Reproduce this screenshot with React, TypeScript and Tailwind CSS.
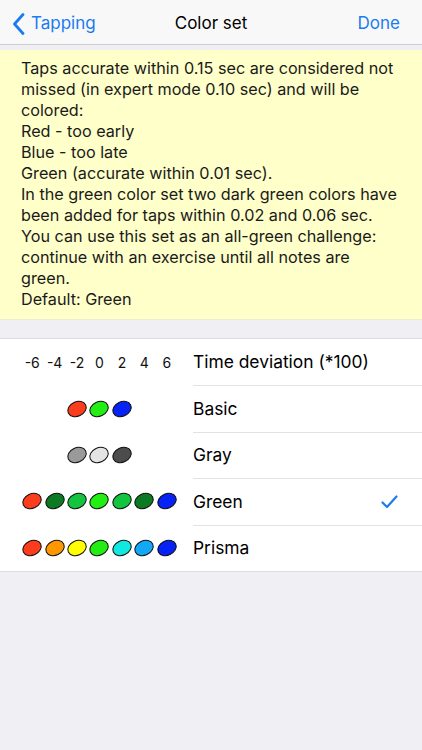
const FONT = "font-['Inter','Liberation_Sans',sans-serif]";

const C = {
  red: "#fb3d1e",
  dark: "#0c7a22",
  mid: "#12c43e",
  bright: "#22ee14",
  blue: "#0622f4",
  orange: "#ff9800",
  yellow: "#ffff00",
  cyan: "#12e8e2",
  sky: "#12a8f6",
  g1: "#9a9a9a",
  g2: "#e4e4e4",
  g3: "#4c4c4c",
};

type Row = { label: string; dots: (string | null)[]; checked?: boolean };

const rows: Row[] = [
  { label: "Basic", dots: [null, null, C.red, C.bright, C.blue, null, null] },
  { label: "Gray", dots: [null, null, C.g1, C.g2, C.g3, null, null] },
  { label: "Green", dots: [C.red, C.dark, C.mid, C.bright, C.mid, C.dark, C.blue], checked: true },
  { label: "Prisma", dots: [C.red, C.orange, C.yellow, C.bright, C.cyan, C.sky, C.blue] },
];

function Dot({ color }: { color: string }) {
  return (
    <svg width="22" height="18" viewBox="0 0 22 18">
      <ellipse cx="11" cy="9" rx="9.6" ry="7.2" transform="rotate(-25 11 9)" fill={color} stroke="#111" strokeWidth="1" />
    </svg>
  );
}

export default function App() {
  const lines = [
    "Taps accurate within 0.15 sec are considered not",
    "missed (in expert mode 0.10 sec) and will be",
    "colored:",
    "Red - too early",
    "Blue - too late",
    "Green (accurate within 0.01 sec).",
    "In the green color set two dark green colors have",
    "been added for taps within 0.02 and 0.06 sec.",
    "You can use this set as an all-green challenge:",
    "continue with an exercise until all notes are",
    "green.",
    "Default: Green",
  ];

  return (
    <div className={`min-h-[750px] w-[422px] bg-[#efeff4] ${FONT}`}>
      <header className="flex h-[45px] items-center border-b border-[#cfcfd3] bg-[#f8f8f8] px-[12px] pt-[3px]">
        <div className="flex w-[120px] items-center gap-[6px] text-[17px] text-[#1a7cf0]">
          <svg width="13" height="22" viewBox="0 0 13 22">
            <path d="M11 1.5 2.5 11 11 20.5" fill="none" stroke="#1a7cf0" strokeWidth="2.8" strokeLinecap="round" strokeLinejoin="round" />
          </svg>
          <span>Tapping</span>
        </div>
        <div className="flex-1 text-center text-[17px] text-black">Color set</div>
        <div className="w-[120px] pr-[10px] text-right text-[17px] text-[#1a7cf0]">Done</div>
      </header>

      <div className="mt-[5px] overflow-hidden whitespace-nowrap border-b border-[#ecebcf] bg-[#ffffc9] pl-[21px] pt-[8px] pb-[9px] text-[16.2px] leading-[21px] text-[#1a1a1a]">
        {lines.map((l) => (
          <div key={l}>{l}</div>
        ))}
      </div>

      <section className="mt-[18px] border-y border-[#dcdce0] bg-white">
        <div className="flex h-[46.4px] items-center">
          <div className="ml-[21px] grid w-[157px] grid-cols-7 text-center text-[14px] text-[#111]">
            {["-6", "-4", "-2", "0", "2", "4", "6"].map((n) => (
              <span key={n}>{n}</span>
            ))}
          </div>
          <div className="ml-[15px] flex h-full flex-1 items-center text-[17.4px] text-black">Time deviation (*100)</div>
        </div>
        {rows.map((r) => (
          <div key={r.label} className="flex h-[46.4px] items-center">
            <div className="ml-[21px] grid w-[157px] grid-cols-7">
              {r.dots.map((d, i) => (
                <div key={i} className="flex justify-center">
                  {d ? <Dot color={d} /> : null}
                </div>
              ))}
            </div>
            <div className="ml-[15px] flex h-full flex-1 items-center justify-between border-t border-[#e2e2e6] pr-[24px] text-[17.4px] text-black">
              <span>{r.label}</span>
              {r.checked ? (
                <svg width="17" height="14" viewBox="0 0 17 14">
                  <path d="M1.5 7.5 6 12 15.5 1.5" fill="none" stroke="#1a7cf0" strokeWidth="2.2" strokeLinecap="round" strokeLinejoin="round" />
                </svg>
              ) : null}
            </div>
          </div>
        ))}
      </section>
    </div>
  );
}
